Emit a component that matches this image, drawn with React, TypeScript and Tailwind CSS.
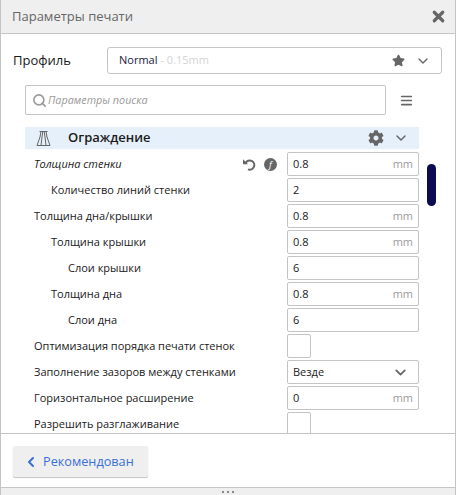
import { ChevronDown, ChevronLeft, Search, X } from "lucide-react";
import { FaCog, FaStar } from "react-icons/fa";
import { FaBars } from "react-icons/fa6";

type Row = {
  label: string;
  indent?: number;
  value?: string;
  unit?: string;
  kind?: "check" | "select";
  italic?: boolean;
  extra?: boolean;
};

const rows: Row[] = [
  { label: "Толщина стенки", value: "0.8", unit: "mm", italic: true, extra: true },
  { label: "Количество линий стенки", indent: 1, value: "2" },
  { label: "Толщина дна/крышки", value: "0.8", unit: "mm" },
  { label: "Толщина крышки", indent: 1, value: "0.8", unit: "mm" },
  { label: "Слои крышки", indent: 2, value: "6" },
  { label: "Толщина дна", indent: 1, value: "0.8", unit: "mm" },
  { label: "Слои дна", indent: 2, value: "6" },
  { label: "Оптимизация порядка печати стенок", kind: "check" },
  { label: "Заполнение зазоров между стенками", kind: "select", value: "Везде" },
  { label: "Горизонтальное расширение", value: "0", unit: "mm" },
  { label: "Разрешить разглаживание", kind: "check" },
];

function SettingRow({ row }: { row: Row }) {
  const pad = row.indent === 2 ? "pl-[34px]" : row.indent === 1 ? "pl-[17px]" : "pl-0";
  return (
    <div className="flex h-[26px] shrink-0 items-center">
      <div className="flex w-[286px] shrink-0 items-center pl-[33px]">
        <span
          className={`${pad} whitespace-nowrap text-[11px] text-[#1a1a1a] ${row.italic ? "italic" : ""}`}
        >
          {row.label}
        </span>
        {row.extra && (
          <div className="ml-auto mr-[10px] flex items-center gap-[8px] text-[#666666]">
            <svg width="14" height="14" viewBox="0 0 14 14" fill="none" stroke="#666666" strokeWidth="2">
              <path d="M3.6 6A4.6 4.6 0 1 1 6 12.4" />
              <path d="M1 2.2v5h5z" fill="#666666" stroke="none" />
            </svg>
            <span className="flex h-[13px] w-[13px] items-center justify-center rounded-full bg-[#666666] text-[9px] italic leading-none text-white">
              f
            </span>
          </div>
        )}
      </div>
      {row.kind === "check" ? (
        <div className="h-[24px] w-[24px] rounded-[2px] border border-[#c4c4c4] bg-white" />
      ) : (
        <div className="flex h-[24px] w-[132px] items-center justify-between rounded-[2px] border border-[#c4c4c4] bg-white pl-[5px] pr-[5px] text-[11px] text-[#1a1a1a]">
          <span>{row.value}</span>
          {row.unit && <span className="text-[#9a9a9a]">{row.unit}</span>}
          {row.kind === "select" && <ChevronDown size={17} strokeWidth={2.6} className="mr-[4px] text-[#666666]" />}
        </div>
      )}
    </div>
  );
}

export default function App() {
  return (
    <div className="flex h-[495px] w-[456px] flex-col overflow-hidden border-x border-[#c4c4c4] bg-white font-['Open_Sans',sans-serif]">
      <div className="flex h-[34px] shrink-0 items-center justify-between border-b border-[#c4c4c4] bg-[#efefef] pl-[11px] pr-[8px]">
        <span className="text-[13px] text-[#666666]">Параметры печати</span>
        <X size={17} strokeWidth={4.5} className="text-[#666666]" />
      </div>

      <div className="flex flex-1 flex-col overflow-hidden">
        <div className="mt-[13px] flex h-[27px] shrink-0 items-center pl-[12px]">
          <span className="w-[94px] text-[13px] text-[#1a1a1a]">Профиль</span>
          <div className="flex h-[27px] w-[335px] items-center rounded-[3px] border border-[#c4c4c4] pl-[11px] pr-[9px] text-[11px]">
            <span className="text-[#1a1a3a]">Normal</span>
            <span className="ml-[3px] text-[#d4d4d4]">- 0.15mm</span>
            <FaStar size={13} className="ml-auto text-[#666666]" />
            <ChevronDown size={16} strokeWidth={2} className="ml-[10px] mr-[1px] text-[#666666]" />
          </div>
        </div>

        <div className="mt-[11px] flex h-[30px] shrink-0 items-center pl-[24px]">
          <div className="flex h-[30px] w-[361px] items-center gap-[1px] rounded-[2px] border border-[#c4c4c4] pl-[6px]">
            <Search size={15} strokeWidth={2.6} className="text-[#9a9a9a]" />
            <span className="text-[10.8px] italic text-[#9a9a9a]">Параметры поиска</span>
          </div>
          <FaBars size={13} className="ml-[14px] text-[#666666]" />
        </div>

        <div className="relative mt-[12px] flex-1 overflow-hidden border-b border-[#c4c4c4]">
          <div className="ml-[24px] flex h-[22px] w-[394px] items-center bg-[#e6f0fa]">
            <svg width="17" height="17" viewBox="0 0 17 17" fill="none" stroke="#666666" strokeWidth="1" className="ml-[10px]">
              <path d="M4.5 1.5h8M6 1.5 5 7 2 15.5h13L12 7l-1-5.5M7.8 1.5 7 7 6 15.5M9.2 1.5 10 7l1 8.5" />
            </svg>
            <span className="ml-[16px] text-[13px] font-semibold text-[#1a1a1a]">Ограждение</span>
            <FaCog size={16} className="ml-auto text-[#666666]" />
            <ChevronDown size={16} strokeWidth={2.2} className="ml-[9px] mr-[10px] text-[#666666]" />
          </div>

          <div className="mt-[2px] flex flex-col">
            {rows.map((row) => (
              <SettingRow key={row.label} row={row} />
            ))}
          </div>

          <div className="absolute left-[426px] top-[37px] h-[42px] w-[9px] rounded-full bg-[#0c0a52]" />
        </div>

        <div className="h-[53px] shrink-0 pl-[12px] pt-[12px]">
          <div className="flex h-[31px] w-[135px] items-center gap-[4px] rounded-[2px] bg-[#efefef] pl-[10px] text-[12.7px] text-[#3a6fd8] shadow-[0_1px_1px_#c4c4c4]">
            <ChevronLeft size={16} strokeWidth={3} />
            <span>Рекомендован</span>
          </div>
        </div>
      </div>

      <div className="flex h-[8px] shrink-0 items-center justify-center gap-[3px] border-t border-[#c4c4c4] bg-[#efefef]">
        <span className="h-[2px] w-[2px] rounded-full bg-[#666666]" />
        <span className="h-[2px] w-[2px] rounded-full bg-[#666666]" />
        <span className="h-[2px] w-[2px] rounded-full bg-[#666666]" />
      </div>
    </div>
  );
}
